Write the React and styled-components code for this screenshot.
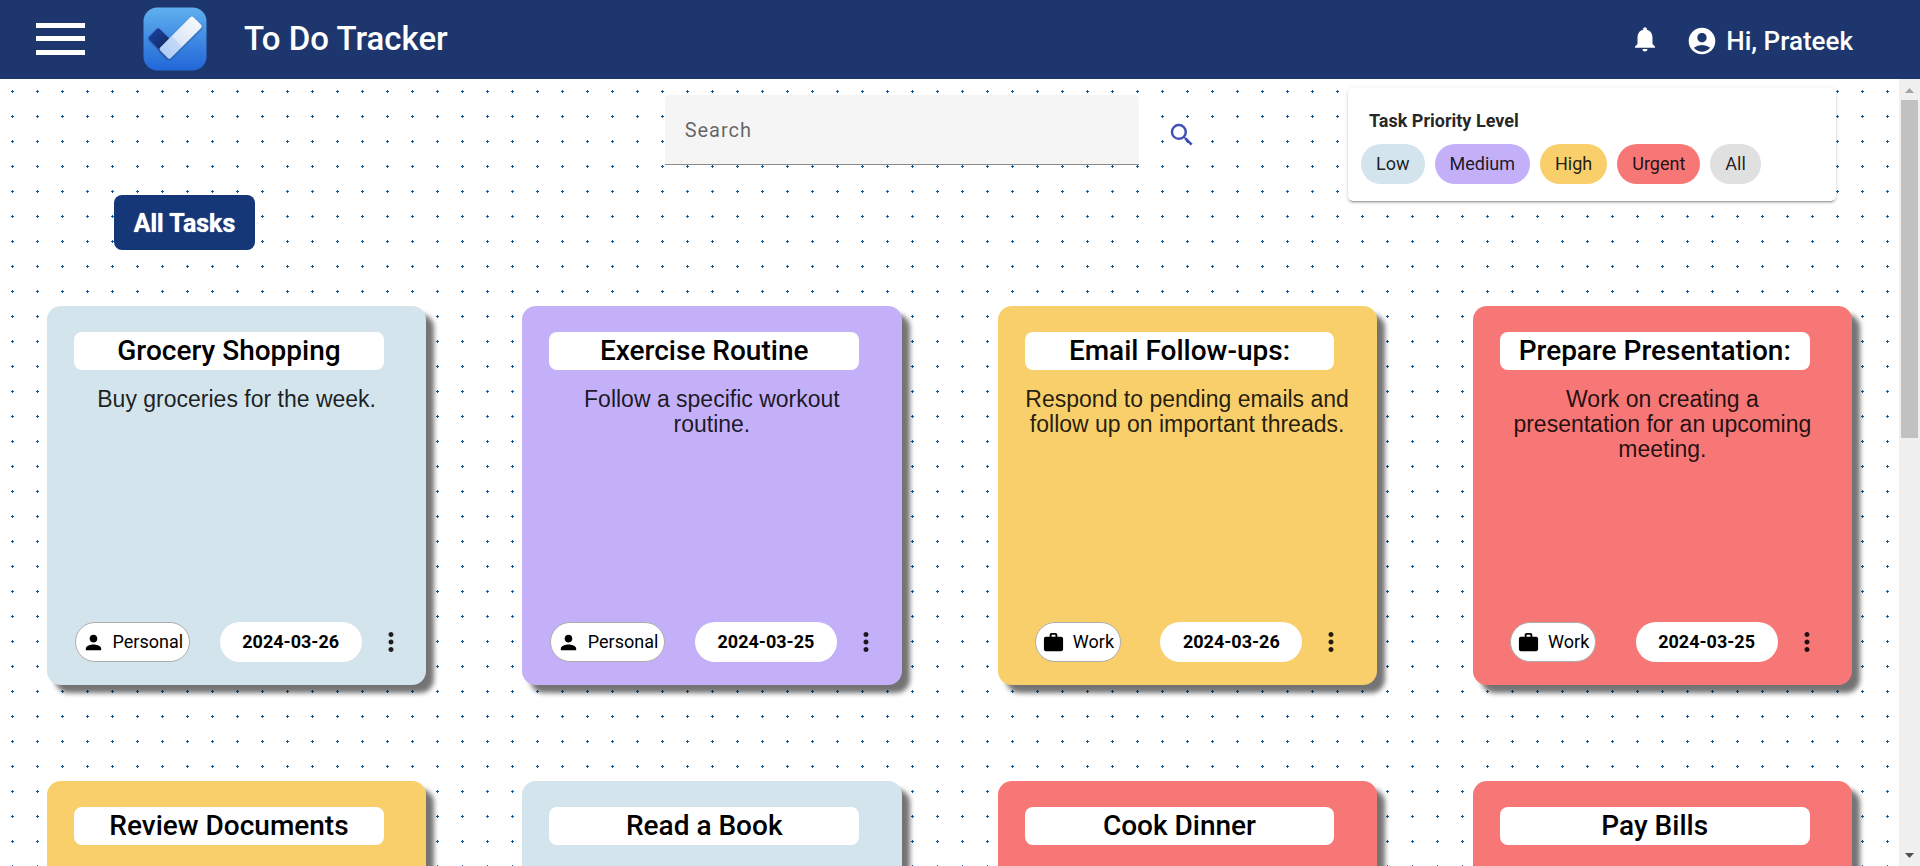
import React from "react";
import styled, { createGlobalStyle } from "styled-components";
import {
  MdNotifications,
  MdAccountCircle,
  MdSearch,
  MdPerson,
  MdWork,
  MdMoreVert,
} from "react-icons/md";

const PRIORITY = {
  low: "#d3e4ec",
  medium: "#c4b0f8",
  high: "#f8cf6b",
  urgent: "#f77777",
  all: "#e0e0e0",
};

const GlobalStyle = createGlobalStyle`
  *, *::before, *::after { box-sizing: border-box; }
  body {
    margin: 0;
    font-family: Roboto, "Liberation Sans", sans-serif;
    color: rgba(0, 0, 0, 0.87);
  }
  button, input { font-family: inherit; color: inherit; }
  button { cursor: pointer; border: 0; padding: 0; }
  svg { flex: none; }
`;

const Page = styled.div`
  display: flex;
  flex-direction: column;
  height: 100vh;
  overflow: hidden;
`;

const Header = styled.header`
  display: flex;
  align-items: center;
  flex: none;
  height: 79px;
  padding: 0 67px 2px 36px;
  background: #1d366d;
  color: #fff;
`;

const MenuButton = styled.button`
  display: flex;
  flex-direction: column;
  justify-content: space-between;
  width: 49px;
  height: 32px;
  background: none;
`;

const MenuBar = styled.span`
  display: block;
  width: 100%;
  height: 5px;
  background: #fff;
`;

const Logo = styled.svg`
  width: 64px;
  height: 64px;
  margin: 0 37px 0 58px;
`;

const AppTitle = styled.h1`
  flex: 1;
  margin: 0;
  font-size: 33px;
  font-weight: 500;
  line-height: 40px;
`;

const BellButton = styled.button`
  display: flex;
  margin-right: 26px;
  background: none;
  color: #fff;
`;

const UserLink = styled.a`
  display: flex;
  align-items: center;
  gap: 8px;
  padding-top: 4px;
  font-size: 26px;
  font-weight: 500;
  line-height: 32px;
  color: #fff;
  text-decoration: none;
`;

const Body = styled.div`
  display: flex;
  flex: 1;
  min-height: 0;
`;

const Board = styled.main`
  flex: 1;
  min-width: 0;
  overflow: hidden;
  background: radial-gradient(circle, #145c9e 7%, transparent 7%) 0 0 / 25px 25px #fff;
`;

const Toolbar = styled.div`
  display: grid;
  grid-template-columns: 35% 1fr auto;
  align-items: start;
  height: 227px;
`;

const AllTasks = styled.button`
  justify-self: start;
  margin: 116px 0 0 114px;
  padding-top: 2px;
  width: 141px;
  height: 55px;
  border-radius: 8px;
  background: #153677;
  color: #fff;
  font-size: 25px;
  font-weight: 700;
  line-height: 32px;
  text-shadow: 0 0 1px #fff;
`;

const SearchForm = styled.form`
  display: flex;
  align-items: center;
  gap: 28px;
  margin-top: 16px;
`;

const SearchInput = styled.input`
  width: 474px;
  height: 70px;
  padding: 0 20px;
  border: 0;
  border-bottom: 1px solid #8b8b8b;
  border-radius: 5px 5px 0 0;
  background: #f5f5f5;
  font-size: 20px;
  letter-spacing: 1px;
  outline: 0;
  &::placeholder { color: rgba(0, 0, 0, 0.6); opacity: 1; }
`;

const SearchButton = styled.button`
  display: flex;
  margin-top: 10px;
  background: none;
  color: #3f51b5;
`;

const Legend = styled.section`
  width: 488px;
  margin: 9px 63px 0 0;
  padding: 21px 13px 17px;
  border-radius: 5px;
  background: #fff;
  box-shadow: 0 3px 1px -2px rgba(0, 0, 0, 0.2), 0 2px 2px rgba(0, 0, 0, 0.14),
    0 1px 5px rgba(0, 0, 0, 0.12);
`;

const LegendTitle = styled.h2`
  margin: 0 0 11px;
  padding-left: 8px;
  font-size: 18px;
  font-weight: 700;
  line-height: 24px;
`;

const Chips = styled.div`
  display: flex;
  gap: 10px;
`;

const Chip = styled.button`
  height: 40px;
  padding: 0 15px;
  border-radius: 20px;
  background: ${(p) => PRIORITY[p.$priority]};
  font-size: 18px;
  line-height: 24px;
`;

const Cards = styled.div`
  display: grid;
  grid-template-columns: repeat(4, minmax(0, 1fr));
  gap: 96px;
  padding: 0 47px 96px;
`;

const Card = styled.article`
  display: flex;
  flex-direction: column;
  aspect-ratio: 1;
  padding: 26px 26px 23px 27px;
  border-radius: 14px;
  background: ${(p) => PRIORITY[p.$priority]};
  box-shadow: 8px 8px 5px rgba(0, 0, 0, 0.55);
  text-align: center;
`;

const CardTitle = styled.h3`
  width: 95%;
  margin: 0 0 17px;
  border-radius: 8px;
  background: #fff;
  color: #000;
  font-size: 28px;
  font-weight: 500;
  line-height: 38px;
`;

const Description = styled.p`
  flex: 1;
  margin: 0;
  padding-right: 1px;
  font-family: "Liberation Sans", Arial, sans-serif;
  font-size: 23px;
  font-weight: 300;
  line-height: 25px;
`;

const CardFooter = styled.footer`
  display: flex;
  align-items: center;
  justify-content: space-evenly;
`;

const Category = styled.span`
  display: flex;
  align-items: center;
  gap: 8px;
  height: 40px;
  padding: 0 6px;
  border: 1px solid #adadad;
  border-radius: 20px;
  background: #fff;
  color: #000;
  font-size: 18px;
  line-height: 24px;
`;

const DueGroup = styled.div`
  display: flex;
  align-items: center;
  margin-left: 29px;
`;

const DueDate = styled.time`
  width: 142px;
  border-radius: 20px;
  background: #fff;
  color: #000;
  font-size: 18px;
  font-weight: 700;
  line-height: 40px;
`;

const MoreButton = styled.button`
  display: flex;
  justify-content: center;
  width: 18px;
  margin-left: 20px;
  background: none;
`;

const Scrollbar = styled.div`
  display: flex;
  flex-direction: column;
  align-items: center;
  flex: none;
  width: 21px;
  background: #f0f0f0;
`;

const ScrollArrow = styled.svg`
  flex: none;
  width: 21px;
  height: 21px;
  fill: ${(p) => p.$color};
`;

const ScrollTrack = styled.div`
  flex: 1;
  width: 17px;
`;

const ScrollThumb = styled.div`
  height: calc(45% + 3px);
  background: #c1c1c1;
`;

const TASKS = [
  { title: "Grocery Shopping", text: "Buy groceries for the week.", priority: "low", category: "Personal", date: "2024-03-26" },
  { title: "Exercise Routine", text: "Follow a specific workout routine.", priority: "medium", category: "Personal", date: "2024-03-25" },
  { title: "Email Follow-ups:", text: "Respond to pending emails and follow up on important threads.", priority: "high", category: "Work", date: "2024-03-26" },
  { title: "Prepare Presentation:", text: "Work on creating a presentation for an upcoming meeting.", priority: "urgent", category: "Work", date: "2024-03-25" },
  { title: "Review Documents", priority: "high" },
  { title: "Read a Book", priority: "low" },
  { title: "Cook Dinner", priority: "urgent" },
  { title: "Pay Bills", priority: "urgent" },
];

const LEVELS = [
  ["low", "Low"],
  ["medium", "Medium"],
  ["high", "High"],
  ["urgent", "Urgent"],
  ["all", "All"],
];

function AppLogo() {
  return (
    <Logo viewBox="0 0 64 64" aria-hidden="true">
      <defs>
        <linearGradient id="tile" x1="0" y1="0" x2="0" y2="1">
          <stop offset="0" stopColor="#5fb0ee" />
          <stop offset="1" stopColor="#2266d8" />
        </linearGradient>
        <linearGradient id="short" x1="0" y1="0" x2="1" y2="0">
          <stop offset="0" stopColor="#1a3f96" />
          <stop offset="0.8" stopColor="#10265f" />
        </linearGradient>
        <linearGradient id="long" x1="0" y1="0" x2="1" y2="0">
          <stop offset="0" stopColor="#b0cdf6" />
          <stop offset="0.38" stopColor="#c3d9f8" />
          <stop offset="0.4" stopColor="#dbe7f7" />
          <stop offset="1" stopColor="#f5f8fc" />
        </linearGradient>
        <filter id="lift" x="-20%" y="-20%" width="140%" height="150%">
          <feDropShadow dx="0" dy="1" stdDeviation="1.2" floodColor="#0c2a66" floodOpacity="0.6" />
        </filter>
      </defs>
      <rect x="0.5" y="0.5" width="63" height="63" rx="14" fill="url(#tile)" />
      <g filter="url(#lift)">
        <rect x="-13" y="-7.4" width="28" height="14.8" rx="2" transform="translate(19.2 35) rotate(45)" fill="url(#short)" />
      </g>
      <g filter="url(#lift)">
        <rect x="-23.5" y="-7.5" width="47" height="15" rx="2.2" transform="translate(37.6 30.7) rotate(-45)" fill="url(#long)" />
      </g>
    </Logo>
  );
}

function TaskCard({ task }) {
  const Icon = task.category === "Work" ? MdWork : MdPerson;
  return (
    <Card $priority={task.priority}>
      <CardTitle>{task.title}</CardTitle>
      <Description>{task.text}</Description>
      {task.category && (
        <CardFooter>
          <Category>
            <Icon size={23} />
            {task.category}
          </Category>
          <DueGroup>
            <DueDate dateTime={task.date}>{task.date}</DueDate>
            <MoreButton type="button" aria-label="Task options">
              <MdMoreVert size={30} />
            </MoreButton>
          </DueGroup>
        </CardFooter>
      )}
    </Card>
  );
}

export default function App() {
  return (
    <Page>
      <GlobalStyle />
      <Header>
        <MenuButton type="button" aria-label="Menu">
          <MenuBar />
          <MenuBar />
          <MenuBar />
        </MenuButton>
        <AppLogo />
        <AppTitle>To Do Tracker</AppTitle>
        <BellButton type="button" aria-label="Notifications">
          <MdNotifications size={30} />
        </BellButton>
        <UserLink href="#profile">
          <MdAccountCircle size={32} />
          Hi, Prateek
        </UserLink>
      </Header>
      <Body>
        <Board>
          <Toolbar>
            <AllTasks type="button">All Tasks</AllTasks>
            <SearchForm role="search">
              <SearchInput type="text" placeholder="Search" aria-label="Search" />
              <SearchButton type="button" aria-label="Run search">
                <MdSearch size={30} />
              </SearchButton>
            </SearchForm>
            <Legend>
              <LegendTitle>Task Priority Level</LegendTitle>
              <Chips>
                {LEVELS.map(([key, label]) => (
                  <Chip key={key} type="button" $priority={key}>
                    {label}
                  </Chip>
                ))}
              </Chips>
            </Legend>
          </Toolbar>
          <Cards>
            {TASKS.map((task) => (
              <TaskCard key={task.title} task={task} />
            ))}
          </Cards>
        </Board>
        <Scrollbar aria-hidden="true">
          <ScrollArrow viewBox="0 0 21 21" $color="#a3a3a3">
            <path d="M6 14h9l-4.5-5z" />
          </ScrollArrow>
          <ScrollTrack>
            <ScrollThumb />
          </ScrollTrack>
          <ScrollArrow viewBox="0 0 21 21" $color="#505050">
            <path d="M6 8h9l-4.5 5z" />
          </ScrollArrow>
        </Scrollbar>
      </Body>
    </Page>
  );
}
